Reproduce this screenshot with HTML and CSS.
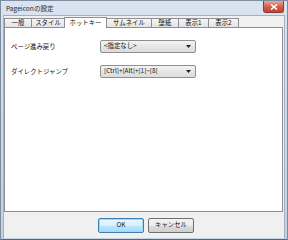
FILE: index.html
```html
<!DOCTYPE html>
<html lang="ja">
<head>
    <meta charset="UTF-8">
    <title>Pageiconの設定</title>
    <link rel="stylesheet" href="styles.css">
</head>
<body>
    <div class="window">
        <div class="titlebar">
            <span class="title">Pageiconの設定</span>
            <div class="close">
                <svg width="8" height="6" viewBox="0 0 8 6"><path d="M1 0.5 L7 5.5 M7 0.5 L1 5.5" stroke="#fff" stroke-width="1.6"/></svg>
            </div>
        </div>
        <div class="client">
            <div class="tabs">
                <div class="tab t-general">一般</div>
                <div class="tab t-style">スタイル</div>
                <div class="tab t-hotkey active">ホットキー</div>
                <div class="tab t-thumb">サムネイル</div>
                <div class="tab t-wall">壁紙</div>
                <div class="tab t-view">表示1</div>
                <div class="tab t-view2">表示2</div>
            </div>
            <div class="panel">
                <div class="row">
                    <span class="label">ページ進み戻り</span>
                    <div class="combo">
                        <span>&lt;指定なし&gt;</span>
                        <svg width="5" height="3" viewBox="0 0 5 3"><path d="M0 0 H5 L2.5 3 Z" fill="#222"/></svg>
                    </div>
                </div>
                <div class="row">
                    <span class="label">ダイレクトジャンプ</span>
                    <div class="combo">
                        <span>[Ctrl]+[Alt]+[1]~[8]</span>
                        <svg width="5" height="3" viewBox="0 0 5 3"><path d="M0 0 H5 L2.5 3 Z" fill="#222"/></svg>
                    </div>
                </div>
            </div>
            <div class="buttons">
                <button class="btn default">OK</button>
                <button class="btn">キャンセル</button>
            </div>
        </div>
    </div>
</body>
</html>
```

FILE: styles.css
```css
body {
    margin: 0;
    font-family: "Noto Sans CJK JP", "Noto Sans", sans-serif;
    font-size: 6.4px;
    color: #111;
}
.window {
    width: 288px;
    height: 240px;
    box-sizing: border-box;
    background: linear-gradient(#d9e4f0, #c3d1e1);
    border: 1px solid #7d8d9f;
    border-bottom-color: #3f6f8c;
    display: flex;
    flex-direction: column;
}
.titlebar {
    height: 14px;
    display: flex;
    align-items: center;
    justify-content: space-between;
    padding-left: 5px;
}
.title {
    font-size: 6.6px;
    color: #1e2b3a;
    margin-top: -1px;
}
.close {
    width: 21px;
    height: 12px;
    margin-right: 3px;
    align-self: flex-start;
    box-sizing: border-box;
    border: 1px solid #8a3b33;
    border-top: none;
    border-radius: 0 0 3px 3px;
    background: linear-gradient(#e9a89d, #d45a48 55%, #c7402f);
    display: flex;
    align-items: center;
    justify-content: center;
}
.client {
    margin: 0 2px 0 2px;
    height: 222px;
    background: #f0f0f0;
    border: 1px solid #a3b0bf;
    border-bottom: none;
    display: flex;
    flex-direction: column;
}
.tabs {
    display: flex;
    align-items: flex-end;
    height: 11px;
    padding-left: 0;
}
.tab {
    height: 9px;
    box-sizing: border-box;
    border: 1px solid #8c8f96;
    border-bottom: none;
    border-right: none;
    background: linear-gradient(#f6f6f6, #e3e3e3);
    display: flex;
    align-items: center;
    justify-content: center;
    line-height: 1;
}
.tab.active {
    height: 11px;
    background: #fff;
    border-right: 1px solid #8c8f96;
    position: relative;
    top: 1px;
    z-index: 1;
}
.t-general { width: 27px; }
.t-style { width: 33px; }
.t-hotkey { width: 43px; }
.t-thumb { width: 44px; border-left: none; }
.t-wall { width: 27px; }
.t-view { width: 30px; }
.t-view2 { width: 31px; border-right: 1px solid #8c8f96; }
.panel {
    height: 185px;
    box-sizing: border-box;
    margin-right: 1px;
    background: #fff;
    border: 1px solid #8c8f96;
    padding: 12px 0 0 6px;
    display: flex;
    flex-direction: column;
    gap: 12px;
}
.row {
    display: flex;
    align-items: center;
    height: 13px;
}
.label {
    width: 89px;
}
.combo {
    width: 96px;
    height: 13px;
    box-sizing: border-box;
    border: 1px solid #8e8f8f;
    border-radius: 2px;
    background: linear-gradient(#f4f4f4, #e6e6e6 50%, #dcdcdc);
    display: flex;
    align-items: center;
    justify-content: space-between;
    padding: 0 4px 0 3px;
    line-height: 1;
}
.buttons {
    display: flex;
    justify-content: center;
    gap: 4px;
    padding: 6px 0 0 4px;
}
.btn {
    height: 15px;
    width: 46px;
    padding: 0;
    font: inherit;
    color: #111;
    border: 1px solid #707070;
    border-radius: 2px;
    background: linear-gradient(#f2f2f2, #ebebeb 50%, #dddddd 51%, #cfcfcf);
    line-height: 1;
}
.btn.default {
    border-color: #3c7fb1;
    background: linear-gradient(#eaf6fd, #d9f0fc 50%, #bee6fd 51%, #a7d9f5);
    box-shadow: inset 0 0 0 1px #9ed8f7;
}
```
